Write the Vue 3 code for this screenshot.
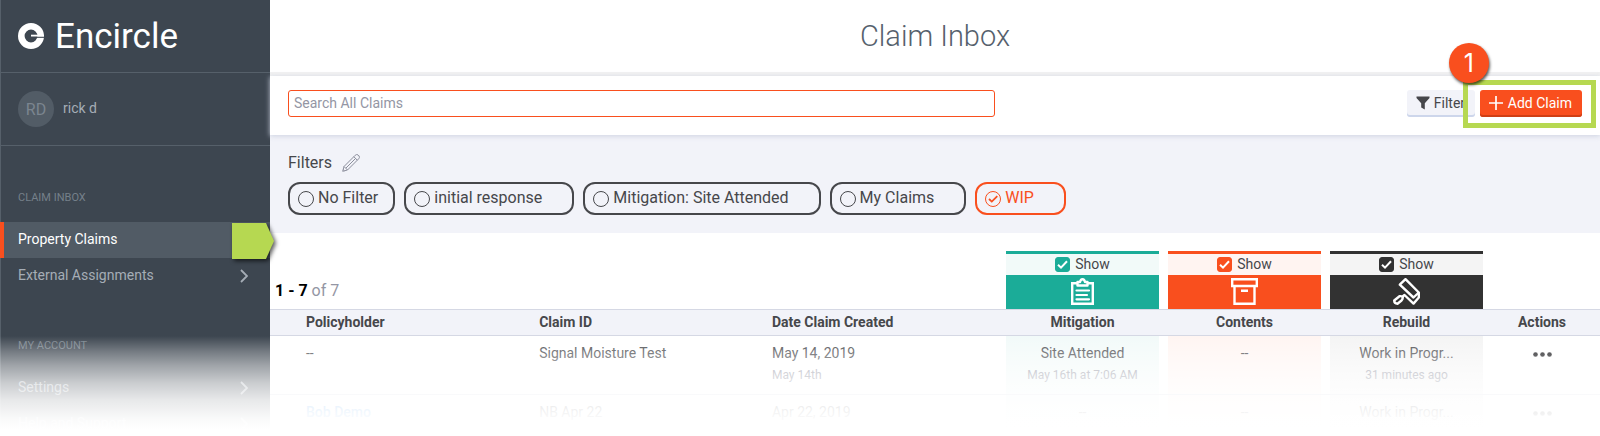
<script setup>
import { ref, reactive } from 'vue'

const query = ref('')
const activeFilter = ref('WIP')
const filters = ['No Filter', 'initial response', 'Mitigation: Site Attended', 'My Claims', 'WIP']

const sections = [
  { title: 'Claim Inbox', items: [
    { label: 'Property Claims', active: true },
    { label: 'External Assignments', more: true },
  ] },
  { title: 'My Account', items: [
    { label: 'Settings', more: true },
    { label: 'Help and Support', more: true },
  ] },
]

const stages = reactive([
  { key: 'mitigation', label: 'Mitigation', show: true },
  { key: 'contents', label: 'Contents', show: true },
  { key: 'rebuild', label: 'Rebuild', show: true },
])

const claims = [
  {
    holder: '--', id: 'Signal Moisture Test', date: 'May 14, 2019', sub: 'May 14th',
    mitigation: ['Site Attended', 'May 16th at 7:06 AM'], contents: ['--'], rebuild: ['Work in Progr...', '31 minutes ago'],
  },
  {
    holder: 'Bob Demo', link: true, id: 'NB Apr 22', date: 'Apr 22, 2019',
    mitigation: ['--'], contents: ['--'], rebuild: ['Work in Progr...'],
  },
]
</script>

<template>
  <div class="page">
    <aside class="sidebar">
      <div class="brand">
        <svg class="brand-mark" viewBox="0 0 26 26" aria-hidden="true">
          <circle cx="13" cy="13" r="9.700" fill="none" stroke="#fff" stroke-width="6.600" />
          <path d="M13 14.200H26" stroke="#3d4650" stroke-width="1.300" />
          <path d="M13 12.600H26" stroke="#fff" stroke-width="1.800" />
        </svg>
        <span class="brand-name">Encircle</span>
      </div>
      <div class="user">
        <span class="avatar">RD</span>
        <span class="user-name">rick d</span>
      </div>
      <nav>
        <section v-for="section in sections" :key="section.title">
          <h2 class="nav-title">{{ section.title }}</h2>
          <a v-for="item in section.items" :key="item.label" href="#" class="nav-item" :class="{ active: item.active }">
            <span>{{ item.label }}</span>
            <svg v-if="item.more" class="chevron" viewBox="0 0 8 14" aria-hidden="true">
              <path d="M1 1l6 6-6 6" fill="none" stroke="currentColor" stroke-width="1.8" />
            </svg>
            <svg v-if="item.active" class="pointer" viewBox="0 0 42 36" aria-hidden="true">
              <path d="M0 0H34L42 18L34 36H0Z" fill="#b6d851" />
            </svg>
          </a>
        </section>
      </nav>
    </aside>

    <main class="main">
      <header class="title-bar"><h1>Claim Inbox</h1></header>

      <div class="toolbar">
        <input v-model="query" class="search" type="text" placeholder="Search All Claims" aria-label="Search All Claims" />
        <div class="actions">
          <button type="button" class="btn btn-filter">
            <svg class="btn-icon" viewBox="0 0 14 14" aria-hidden="true"><path d="M.5.5h13v1.4L8.8 7.2v6.3L5.2 11.4V7.2L.5 1.9Z" fill="currentColor" /></svg>
            Filter
          </button>
          <div class="add-wrap">
            <button type="button" class="btn btn-add">
              <svg class="btn-icon" viewBox="0 0 14 14" aria-hidden="true"><path d="M7 0v14M0 7h14" stroke="currentColor" stroke-width="1.7" /></svg>
              Add Claim
            </button>
            <span class="highlight"></span>
            <span class="step">1</span>
          </div>
        </div>
      </div>

      <section class="filters">
        <div class="filters-head">
          <h2>Filters</h2>
          <button type="button" class="edit" aria-label="Edit filters">
            <svg viewBox="0 0 18 18" fill="none" stroke="#8c8e9c" stroke-width="1" stroke-linejoin="round" aria-hidden="true">
              <path d="M.7 17.3L2 12.500L13.200 1.300Q14.500 0 16 .9L17.100 2Q18 3.500 16.700 4.800L5.500 16Z" />
              <path d="M2 12.500L5.500 16M11.800 2.700L15.300 6.200M4 14L13.500 4.500M1.200 15.500L2.500 16.800" />
            </svg>
          </button>
        </div>
        <div class="pills">
          <label v-for="(name, i) in filters" :key="name" class="pill" :class="{ short: i === 0, on: activeFilter === name }">
            <span class="radio">
              <input v-model="activeFilter" type="radio" name="filter" :value="name" />
              <svg v-if="activeFilter === name" viewBox="0 0 16 16" aria-hidden="true">
                <path d="M4 8L6.800 10.600L12.300 5.200" fill="none" stroke="currentColor" stroke-width="1.800" />
              </svg>
            </span>
            <span>{{ name }}</span>
          </label>
        </div>
      </section>

      <table class="claims">
        <colgroup>
          <col /><col class="c-id" /><col class="c-date" />
          <col v-for="s in stages" :key="s.key" class="c-stage" />
          <col class="c-actions" />
        </colgroup>
        <thead>
          <tr class="stage-row">
            <td colspan="3" class="count"><b>1 - 7</b> of 7</td>
            <td v-for="s in stages" :key="s.key" class="stage-cell">
              <div class="stage" :class="s.key">
                <label class="show">
                  <span class="check">
                    <input v-model="s.show" type="checkbox" />
                    <svg v-if="s.show" viewBox="0 0 15 15" aria-hidden="true"><path d="M3 7.800L6 10.700L12 4.300" fill="none" stroke="#fff" stroke-width="2" /></svg>
                  </span>
                  <span class="show-text">Show</span>
                </label>
                <div class="stage-icon">
                  <svg v-if="s.key === 'mitigation'" viewBox="0 0 27 27" fill="none" stroke="#fff" stroke-width="2.400" aria-hidden="true">
                    <path d="M8 5.200H3.200V25.800H23.800V5.200H19" />
                    <path d="M8.500 4H11Q11.500 1.200 13.500 1.200T16 4H18.500V7.500H8.500Z" stroke-linejoin="round" />
                    <path d="M7.500 12.500H20M7.500 17H18M7.500 21.300H20" stroke-width="2.200" stroke-linecap="round" />
                  </svg>
                  <svg v-else-if="s.key === 'contents'" viewBox="0 0 27 27" fill="none" stroke="#fff" stroke-width="2.400" aria-hidden="true">
                    <path d="M1.200 1.200H25.800V8H1.200ZM3.500 8V25.800H23.500V8M10 12.700H17" />
                  </svg>
                  <svg v-else viewBox="0 0 27 27" fill="none" stroke="#fff" stroke-width="2.400" stroke-linejoin="round" aria-hidden="true">
                    <path d="M12.500 1.200L25.800 14.500L20.500 19.500L6.800 6.700Z" />
                    <path d="M25.800 14.500V19.500L20.500 25.600L11.500 17L9 19" />
                    <path d="M9.800 19.500Q9 17.800 6.500 18.200L1.200 22.500Q1.200 25.700 4.500 25.700L8.500 22.500Q9.800 21 9.800 19.500Z" />
                  </svg>
                </div>
              </div>
            </td>
            <td></td>
          </tr>
          <tr class="head-row">
            <th scope="col">Policyholder</th>
            <th scope="col">Claim ID</th>
            <th scope="col">Date Claim Created</th>
            <th v-for="s in stages" :key="s.key" scope="col" class="center">{{ s.label }}</th>
            <th scope="col" class="act">Actions</th>
          </tr>
        </thead>
        <tbody>
          <tr v-for="claim in claims" :key="claim.id">
            <td><a v-if="claim.link" href="#" class="holder">{{ claim.holder }}</a><template v-else>{{ claim.holder }}</template></td>
            <td>{{ claim.id }}</td>
            <td>{{ claim.date }}<small v-if="claim.sub">{{ claim.sub }}</small></td>
            <td v-for="s in stages" :key="s.key" class="status">
              <div :class="s.key">{{ claim[s.key][0] }}<small v-if="claim[s.key][1]">{{ claim[s.key][1] }}</small></div>
            </td>
            <td class="act">
              <button type="button" class="dots" aria-label="Claim actions">
                <svg viewBox="0 0 19 5" fill="#111114" aria-hidden="true"><circle cx="2.500" cy="2.500" r="2.300" /><circle cx="9.500" cy="2.500" r="2.300" /><circle cx="16.500" cy="2.500" r="2.300" /></svg>
              </button>
            </td>
          </tr>
        </tbody>
      </table>
    </main>
    <div class="fade"></div>
  </div>
</template>

<style>
body {
  margin: 0;
  background: #fff;
}
</style>

<style scoped>
.page {
  position: relative;
  display: flex;
  height: 100vh;
  overflow: hidden;
  font-family: Roboto, "Liberation Sans", sans-serif;
  font-size: 14px;
  color: #46474b;
}
.page * { box-sizing: border-box; }
h1, h2 { margin: 0; font-weight: 400; }
a { text-decoration: none; }
button, input { font: inherit; color: inherit; margin: 0; }
svg { display: block; }

.sidebar {
  flex: 0 0 270px;
  background: #3d4650;
  color: #a5adb6;
  border-left: 1px solid #56606a;
}
.brand {
  display: flex;
  align-items: center;
  gap: 11px;
  height: 73px;
  padding-left: 17px;
  border-bottom: 1px solid #56606a;
}
.brand-mark { width: 26px; height: 26px; }
.brand-name {
  font-size: 35px;
  font-weight: 400;
  color: #fff;
}
.user {
  display: flex;
  align-items: center;
  gap: 9px;
  height: 73px;
  padding-left: 17px;
  border-bottom: 1px solid #56606a;
}
.user-name { padding-bottom: 2px; }
.avatar {
  display: grid;
  place-items: center;
  width: 36px;
  height: 36px;
  border-radius: 50%;
  background: #525c66;
  color: #7b858f;
  font-size: 16px;
}
.nav-title {
  padding: 44px 17px 16px;
  font-size: 11px;
  line-height: 16px;
  color: #75808a;
  text-transform: uppercase;
}
.nav-item {
  position: relative;
  display: flex;
  align-items: center;
  justify-content: space-between;
  height: 36px;
  padding: 0 22px 0 17px;
  color: #a5adb6;
}
.nav-item span { padding-bottom: 2px; }
.nav-item.active {
  margin-left: -1px;
  padding-left: 14px;
  border-left: 4px solid #f94f1e;
  background: #515b65;
  color: #fff;
}
.chevron { width: 8px; height: 14px; }
.pointer {
  position: absolute;
  z-index: 3;
  top: 1px;
  right: -4px;
  width: 42px;
  height: 36px;
  filter: drop-shadow(2px 2px 2px rgba(0, 0, 0, 0.65));
}

.main { flex: 1; min-width: 0; }
.title-bar {
  display: grid;
  place-items: center;
  height: 76px;
  border-bottom: 4px solid #f2f2f2;
}
h1 {
  font-size: 29px;
  font-weight: 300;
  color: #56616d;
}
.toolbar {
  position: relative;
  z-index: 2;
  display: flex;
  align-items: center;
  justify-content: space-between;
  height: 59px;
  padding: 0 18px 4px;
  background: #fff;
  box-shadow: 0 1px 5px rgba(200, 206, 222, 0.9);
}
.search {
  width: 54.6%;
  height: 27px;
  padding: 0 5px 2px;
  border: 1px solid #f94f1e;
  border-radius: 3px;
  outline: none;
  background: #fff;
}
.search::placeholder { color: #9496a4; opacity: 1; }
.actions { display: flex; gap: 5px; }
.btn {
  display: flex;
  align-items: center;
  height: 27px;
  padding: 0 9px 2px;
  border: 0;
  border-radius: 3px;
  white-space: nowrap;
}
.btn-icon { width: 14px; height: 14px; }
.btn-filter {
  gap: 4px;
  width: 68px;
  background: #f2f3f9;
  box-shadow: inset 0 -2px #cdd6eb;
}
.btn-add {
  gap: 5px;
  padding: 0 10px 2px 9px;
  background: #f94f1e;
  box-shadow: inset 0 -2px #cf3f15;
  color: #fff;
}
.add-wrap { position: relative; }
.highlight {
  position: absolute;
  inset: -10px -14px -11px -17px;
  border: 5px solid #b6d851;
}
.step {
  position: absolute;
  top: -47px;
  left: -31px;
  display: grid;
  place-items: center;
  width: 40px;
  height: 40px;
  border-radius: 50%;
  background: #f94f1e;
  box-shadow: 1px 2px 3px rgba(0, 0, 0, 0.65);
  color: #fff;
  font-family: Inter, "Liberation Sans", sans-serif;
  font-size: 25px;
}

.filters {
  height: 98px;
  padding: 17px 18px 0;
  background: #f2f3f9;
}
.filters-head {
  display: flex;
  align-items: center;
  gap: 10px;
  height: 22px;
}
.filters-head h2 { padding-bottom: 2px; font-size: 16px; }
.edit {
  width: 18px;
  height: 18px;
  padding: 0;
  border: 0;
  background: none;
}
.pills {
  display: flex;
  gap: 9px;
  margin-top: 8px;
}
.pill {
  display: flex;
  align-items: center;
  gap: 4px;
  height: 33px;
  padding: 0 30px 2px 8px;
  border: 2px solid currentColor;
  border-radius: 12px;
  font-size: 16px;
  white-space: nowrap;
}
.pill.short { padding-right: 15px; }
.pill.on { color: #f94f1e; }
.radio, .check { display: grid; }
.radio { width: 16px; height: 16px; margin-top: 2px; }
.radio > *, .check > * { grid-area: 1 / 1; }
.radio input {
  appearance: none;
  width: 16px;
  height: 16px;
  border: 1px solid currentColor;
  border-radius: 50%;
}
.radio svg, .check svg { pointer-events: none; }

.claims {
  width: 100%;
  table-layout: fixed;
  border-spacing: 0;
  line-height: 18px;
}
.c-id { width: 17.5%; }
.c-date { width: 17.3%; }
.c-stage { width: 162px; }
.c-actions { width: 112px; }
td, th { padding: 0; text-align: left; }
.stage-row td { height: 76px; vertical-align: bottom; }
.stage-row .count {
  padding: 0 0 8px 5px;
  font-size: 16px;
  line-height: 20px;
  color: #9496a4;
}
.count b { font-weight: 700; color: #000; }
.stage-row .stage-cell { padding: 0 5px 0 4px; }
.stage { border-top: 3px solid var(--tone); background: var(--tint); }
.mitigation { --tone: #1bac98; --tint: #f2faf9; --cell: #f2faf9; }
.contents { --tone: #f94f1e; --tint: #fff4f1; --cell: #fff5f2; }
.rebuild { --tone: #323232; --tint: #f4f4f4; --cell: #f4f4f4; }
.show {
  display: flex;
  align-items: center;
  justify-content: center;
  gap: 5px;
  height: 21px;
}
.show-text { padding-bottom: 2px; }
.check input {
  appearance: none;
  width: 15px;
  height: 15px;
  border: 1px solid var(--tone);
  border-radius: 3px;
}
.check input:checked { background: var(--tone); }
.check svg { width: 15px; height: 15px; }
.stage-icon {
  display: flex;
  justify-content: center;
  height: 34px;
  padding-top: 3px;
  background: var(--tone);
}
.stage-icon svg { width: 27px; height: 27px; }
.head-row th {
  height: 27px;
  padding-bottom: 2px;
  border: solid #d5d8e4;
  border-width: 1px 0;
  background: #f2f3f9;
  font-weight: 700;
}
.head-row th:first-child, tbody td:first-child { padding-left: 36px; }
.head-row .center { padding-right: 1px; text-align: center; }
.head-row .act, .act { padding-right: 4px; text-align: center; }
tbody td {
  height: 59px;
  padding-top: 8px;
  border-bottom: 1px solid #dcdfe9;
  vertical-align: top;
}
small {
  display: block;
  margin-top: 4px;
  font-size: 12px;
  color: #8f919e;
}
.holder { color: #2b8be8; font-weight: 500; }
tbody .status { padding: 0 5px 0 4px; }
.status > div {
  height: 58px;
  padding-top: 8px;
  background: var(--cell);
  text-align: center;
}
.dots {
  width: 19px;
  height: 20px;
  padding: 0;
  border: 0;
  background: none;
}

.fade {
  position: absolute;
  z-index: 4;
  inset: auto 0 0;
  height: 102px;
  pointer-events: none;
  background: linear-gradient(
    rgba(255, 255, 255, 0) 2px,
    rgba(255, 255, 255, 0.28) 17px,
    rgba(255, 255, 255, 0.5) 31px,
    rgba(255, 255, 255, 0.73) 49px,
    rgba(255, 255, 255, 0.88) 66px,
    rgba(255, 255, 255, 0.97) 84px,
    #fff 95px
  );
}
</style>
